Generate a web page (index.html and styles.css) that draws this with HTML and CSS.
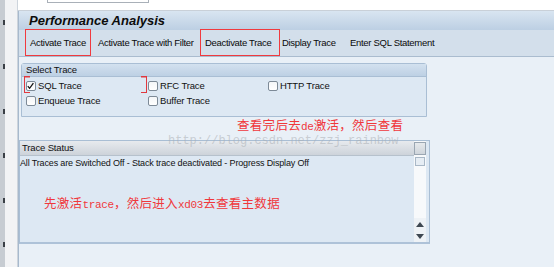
FILE: index.html
```html
<!DOCTYPE html>
<html lang="en">
<head>
<meta charset="utf-8">
<title>Performance Analysis</title>
<link rel="stylesheet" href="styles.css">
</head>
<body>
<div class="screen">
  <div class="rail"><span></span><span></span><span></span><span></span><span></span><span></span></div>
  <div class="gutter"></div>
  <div class="main">
    <div class="topbar"><div class="field"></div></div>
    <div class="panel">
      <div class="title">Performance Analysis</div>
      <div class="toolbar">
        <span class="btn b-activate mark">Activate Trace</span>
        <span class="btn b-filter">Activate Trace with Filter</span>
        <span class="btn b-deactivate mark">Deactivate Trace</span>
        <span class="btn b-display">Display Trace</span>
        <span class="btn b-sql">Enter SQL Statement</span>
      </div>
      <div class="content">
        <div class="group">
          <div class="group-head">Select Trace</div>
          <div class="group-body">
            <label class="chk"><span class="box"><svg viewBox="0 0 10 10" width="10" height="10"><path d="M2 5.2 L4 7.6 L8.2 1.8" fill="none" stroke="#111" stroke-width="1.4"/></svg></span>SQL Trace</label>
            <label class="chk"><span class="box"></span>RFC Trace</label>
            <label class="chk"><span class="box"></span>HTTP Trace</label>
            <label class="chk"><span class="box"></span>Enqueue Trace</label>
            <label class="chk"><span class="box"></span>Buffer Trace</label>
          </div>
          <div class="bracket"></div>
        </div>
        <div class="note note1">查看完后去<span class="lat">de</span>激活，然后查看</div>
        <div class="status">
          <div class="status-main">
            <div class="status-head">Trace Status</div>
            <div class="status-body">
              <div class="status-line">All Traces are Switched Off - Stack trace deactivated - Progress Display Off</div>
              <div class="note note2">先激活<span class="lat">trace</span>，然后进入<span class="lat">xd03</span>去查看主数据</div>
            </div>
          </div>
          <div class="scroll">
            <div class="corner"></div>
            <div class="thumb"></div>
            <div class="track"></div>
            <div class="arrow up"><svg viewBox="0 0 8 5" width="8" height="5"><path d="M0 5 L4 0 L8 5 Z" fill="#3e4852"/></svg></div>
            <div class="arrow down"><svg viewBox="0 0 8 5" width="8" height="5"><path d="M0 0 L8 0 L4 5 Z" fill="#3e4852"/></svg></div>
          </div>
        </div>
        <div class="watermark">http://blog.csdn.net/zzj_rainbow</div>
      </div>
    </div>
  </div>
</div>
</body>
</html>
```

FILE: styles.css
```css
* { box-sizing: border-box; }
html, body { margin: 0; padding: 0; }
body {
  width: 554px;
  height: 267px;
  overflow: hidden;
  background: #e9f0f7;
  font-family: "Liberation Sans", Arial, sans-serif;
  font-size: 9px;
  letter-spacing: -0.15px;
  color: #111;
}
.screen {
  display: flex;
  width: 554px;
  height: 267px;
}
.rail {
  width: 5px;
  background: #c7ccd2;
  display: flex;
  flex-direction: column;
  justify-content: space-around;
  align-items: flex-end;
}
.rail span {
  width: 2px;
  height: 5px;
  background: #3a3f46;
}
.gutter {
  width: 13px;
  background: #f2f3f5;
  border-right: 1px solid #cdd4dc;
}
.main {
  flex: 1;
  display: flex;
  flex-direction: column;
}
.topbar {
  height: 11px;
  background: #ffffff;
  border-bottom: 1px solid #c9d0d8;
  padding-left: 29px;
}
.field {
  width: 102px;
  height: 3px;
  border: 1px solid #a9b0b8;
  border-top: none;
  background: #fff;
}
.panel {
  flex: 1;
  display: flex;
  flex-direction: column;
  border-left: 1px solid #a7b9cd;
  background: #e9f0f7;
}
.title {
  height: 19px;
  padding-left: 10px;
  background: linear-gradient(#d9e5f1, #bccfe3);
  font-size: 13px;
  font-weight: bold;
  font-style: italic;
  letter-spacing: 0;
  line-height: 19px;
  color: #0c0c0c;
}
.toolbar {
  height: 27px;
  display: flex;
  gap: 2px;
  padding-left: 6px;
  background: #d3dfeb;
  border-bottom: 1px solid #aabccf;
  font-size: 9.5px;
  letter-spacing: -0.3px;
  color: #0a0a0a;
}
.btn {
  flex: none;
  display: flex;
  align-items: center;
  padding: 0 0 0 4px;
  border: 1px solid transparent;
  margin-top: -1px;
  white-space: nowrap;
  overflow: visible;
}
.toolbar .mark { border-color: #f03a3f; }
.b-activate { width: 66px; }
.b-filter { width: 105px; }
.b-deactivate { width: 80px; }
.b-display { width: 63px; margin-left: -2px; padding-left: 1px; }
.content {
  position: relative;
  flex: 1;
  display: flex;
  flex-direction: column;
  padding-top: 6px;
}
.group {
  position: relative;
  margin-left: 2px;
  width: 406px;
  height: 54px;
  background: #dde8f3;
  border: 1px solid #a9bed4;
  border-radius: 3px 3px 0 0;
}
.group-head {
  height: 13px;
  padding-left: 4px;
  line-height: 12px;
  background: linear-gradient(#d3e1ef, #bdd0e4);
  border-bottom: 1px solid #a9bed4;
  font-size: 9.5px;
}
.group-body {
  display: grid;
  grid-template-columns: 122px 120px auto;
  grid-auto-rows: 15px;
  padding: 1px 0 0 4px;
}
.chk {
  display: flex;
  align-items: center;
  gap: 2px;
  white-space: nowrap;
  font-size: 9.5px;
}
.box {
  width: 10px;
  height: 10px;
  border: 1px solid #7d8a97;
  border-radius: 2px;
  background: linear-gradient(#f4f6f8, #ffffff);
  display: flex;
}
.box svg { margin: -1px 0 0 -1px; }
.bracket {
  position: absolute;
  left: 2px;
  top: 12px;
  width: 123px;
  height: 17px;
  border-left: 1.5px solid #e0393f;
  border-right: 1.5px solid #e0393f;
  background:
    linear-gradient(#e0393f, #e0393f) left top / 5px 1.5px no-repeat,
    linear-gradient(#e0393f, #e0393f) right top / 5px 1.5px no-repeat,
    linear-gradient(#e0393f, #e0393f) left bottom / 5px 1.5px no-repeat,
    linear-gradient(#e0393f, #e0393f) right bottom / 5px 1.5px no-repeat;
}
.note {
  font-family: "Noto Sans CJK SC", sans-serif;
  font-size: 12.5px;
  line-height: 14px;
  letter-spacing: 0.3px;
  color: #f0383c;
  white-space: nowrap;
}
.note .lat {
  font-family: "Liberation Mono", monospace;
  font-size: 11px;
  letter-spacing: -0.3px;
}
.note1 {
  margin-top: 1px;
  padding-left: 218px;
}
.status {
  margin-top: 6px;
  width: 411px;
  height: 104px;
  display: flex;
  background: #dde8f3;
  border: 1px solid #a9bed4;
  border-bottom: 2px solid #aec2d8;
  padding-right: 3px;
}
.status-main {
  flex: 1;
  display: flex;
  flex-direction: column;
}
.status-head {
  height: 15px;
  padding-left: 2px;
  line-height: 14px;
  background: linear-gradient(#e7eaee, #cdd3da);
  border-bottom: 1px solid #b6c1cc;
  font-size: 9.5px;
}
.status-body {
  flex: 1;
  display: flex;
  flex-direction: column;
}
.status-line {
  line-height: 14px;
  white-space: nowrap;
}
.note2 {
  margin-top: 26px;
  padding-left: 24px;
}
.scroll {
  width: 12px;
  display: flex;
  flex-direction: column;
  background: #f7f9fb;
}
.corner {
  margin-top: 1px;
  height: 13px;
  border: 1px solid #9aa6b2;
  background: linear-gradient(#e6e9ec, #cfd5db);
}
.thumb {
  margin: 2px 1px 0 1px;
  height: 9px;
  border: 1px solid #a9b8c7;
  background: #e6edf4;
}
.track { flex: 1; }
.arrow {
  height: 12px;
  display: flex;
  align-items: center;
  justify-content: center;
  background: #eef2f6;
}
.watermark {
  position: absolute;
  left: 149px;
  top: 77px;
  font-family: "Liberation Mono", monospace;
  font-size: 12px;
  letter-spacing: 0;
  color: rgba(170, 175, 180, 0.55);
  white-space: nowrap;
}
```
